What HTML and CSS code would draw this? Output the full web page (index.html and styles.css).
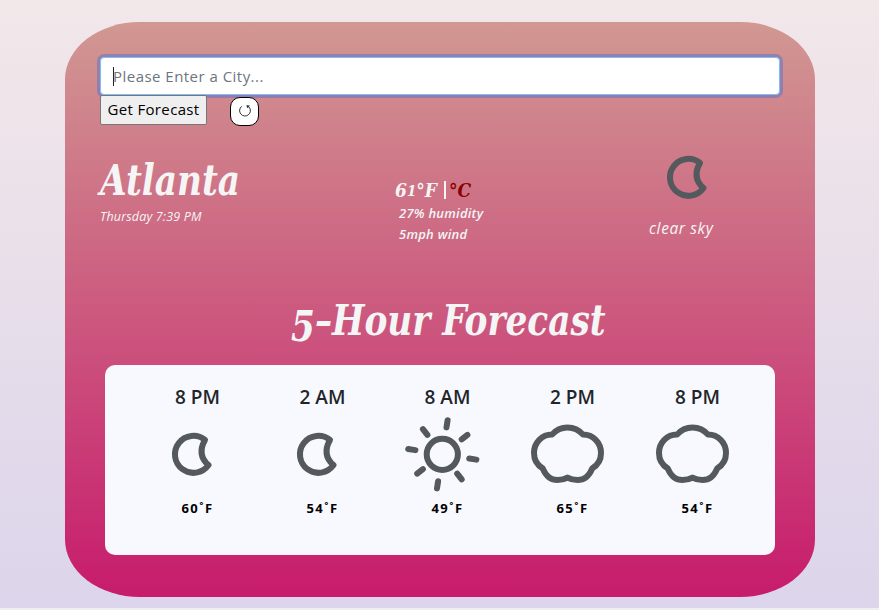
FILE: index.html
```html
<!DOCTYPE html>
<html lang="en">
<head>
<meta charset="utf-8">
<title>Weather</title>
<link rel="stylesheet" href="styles.css">
</head>
<body>
<svg class="symbols" aria-hidden="true">
  <symbol id="moon" viewBox="0 0 80 80"><path d="M53 25.900A18.500 18.500 0 1 0 56.500 51.100C48 43.600 48 34.600 53 25.900Z"/></symbol>
  <symbol id="sun" viewBox="0 0 80 80">
    <circle cx="40.3" cy="40.3" r="15.6"/>
    <g id="rays">
      <path d="M44.5 13.4L45.6 6.2M59.7 25.4L65.4 20.9M67.2 44.5L74.4 45.6M55.2 59.7L59.7 65.4M36.1 67.2L35 74.4M20.9 55.2L15.2 59.7M13.4 36.1L6.2 35M25.4 20.9L20.9 15.2"/>
    </g>
  </symbol>
  <symbol id="cloud" viewBox="0 0 80 80"><path d="M25 20.6C29 16 34.5 13.5 40.5 13.500S52 16 56 20.6C66 20.6 74 28.5 74 39C74 45.5 71 51 65.3 54.3C62.5 61 57.5 66 50.5 66C47 66 43.5 65.3 40.5 63.6C37.5 65.3 34 66 30.5 66C23.5 66 18.5 61 15.7 54.3C10 51 7 45.5 7 39C7 28.5 15 20.6 25 20.6Z"/></symbol>
</svg>
<main class="card">
  <form class="search">
    <div class="field"><span class="caret"></span><span>Please Enter a City...</span></div>
    <div class="actions">
      <button type="button" class="submit">Get Forecast</button>
      <button type="button" class="refresh" aria-label="Refresh"><svg viewBox="0 0 14 14"><path d="M3.6 2.4A5.4 5.4 0 1 0 11.2 3.2L9.3 2"/><path class="head" d="M8.3 1.2L12 1.5L9.3 4.2Z"/></svg></button>
    </div>
  </form>
  <section class="current">
    <div class="place"><h1><span class="fit">Atlanta</span></h1><p>Thursday 7:39 PM</p></div>
    <div class="readings">
      <div class="temp"><b>6</b><b class="small">1</b><b>°F</b><i class="bar"></i><b class="unit">°C</b></div>
      <p>27% humidity</p>
      <p>5mph wind</p>
    </div>
    <div class="sky"><svg class="icon"><use href="#moon"/></svg><p>clear sky</p></div>
  </section>
  <h2><span class="fit"><span class="drop">5</span>–Hour Forecast</span></h2>
  <section class="hours">
    <div class="hour"><h3>8 PM</h3><svg class="icon"><use href="#moon"/></svg><p>60˚F</p></div>
    <div class="hour"><h3>2 AM</h3><svg class="icon"><use href="#moon"/></svg><p>54˚F</p></div>
    <div class="hour"><h3>8 AM</h3><svg class="icon"><use href="#sun"/></svg><p>49˚F</p></div>
    <div class="hour"><h3>2 PM</h3><svg class="icon"><use href="#cloud"/></svg><p>65˚F</p></div>
    <div class="hour"><h3>8 PM</h3><svg class="icon"><use href="#cloud"/></svg><p>54˚F</p></div>
  </section>
</main>
</body>
</html>
```
FILE: styles.css
```css
* { box-sizing: border-box; }
html { height: 100%; background: #f0f0ef; overflow: hidden; }
body {
  margin: 0;
  height: 608px;
  padding-top: 22px;
  background: linear-gradient(#f2e7e9, #dcd5eb);
  font-family: "Open Sans", "Noto Sans", sans-serif;
  overflow: hidden;
}
h1, h2, h3, p { margin: 0; }
.symbols { display: none; }
.card {
  width: 750px;
  height: 575px;
  margin: 0 auto 0 65px;
  padding: 35px 35px 0;
  border-radius: 10%;
  background: linear-gradient(#d19892, #c71b6c);
  color: #f5f5f5;
}
.field {
  display: flex;
  align-items: center;
  height: 38px;
  width: 680px;
  padding-left: 12px;
  border: 1px solid #80bdff;
  border-radius: 4px;
  background: #fff;
  box-shadow: 0 0 0 3px rgba(65, 110, 215, .42);
  color: #6c757d;
  font-size: 15px;
  letter-spacing: .47px;
}
.caret { width: 1px; height: 19px; margin-right: -1px; background: #222; }
.actions { display: flex; height: 31px; }
.submit {
  width: 107px;
  height: 30px;
  padding: 0 0 2px;
  border: 1px solid #767676;
  border-radius: 2px;
  background: #efefef;
  color: #000;
  font: 15px/26px "Open Sans", sans-serif;
  letter-spacing: .35px;
  white-space: nowrap;
}
.refresh {
  width: 29px;
  height: 29px;
  margin: 2px 0 0 23px;
  padding: 0 0 2px;
  border: 1px solid #000;
  border-radius: 10px;
  background: #fff;
}
.refresh svg { display: block; width: 14px; height: 14px; margin: 0 auto; }
.refresh path { fill: none; stroke: #333; stroke-width: 1; }
.refresh .head { fill: #333; stroke: none; }
.fit { display: inline-block; transform: scaleX(.908); transform-origin: 0 50%; white-space: nowrap; }
.current {
  display: grid;
  grid-template-columns: 295px 250px 135px;
  height: 157px;
  padding-top: 11px;
  font-style: italic;
}
.place { padding-top: 20px; }
h1, h2, .temp { font-family: "DejaVu Serif Condensed", "DejaVu Serif", serif; font-stretch: condensed; font-style: italic; font-weight: 700; }
h1 { height: 49px; font-size: 42px; line-height: 48px; }
.place p { font-size: 12.5px; line-height: 21px; font-weight: 500; letter-spacing: .17px; }
.readings { padding-top: 39px; }
.temp { display: flex; align-items: center; height: 27px; font-size: 19px; line-height: 26px; }
.temp .small { font-size: 15px; padding-top: 3px; }
.bar { width: 2px; height: 18px; margin: 0 3px 0 7px; background: #f5f5f5; }
.unit { color: #8b0000; }
.readings p { padding-left: 4px; font-size: 13px; line-height: 21px; font-weight: 600; letter-spacing: .25px; }
.icon { display: block; width: 80px; height: 80px; fill: none; stroke: #54595e; stroke-width: 6; stroke-linejoin: round; }
#rays { stroke-linecap: round; }
.sky .icon { margin-left: 2px; }
.sky p { padding-left: 4px; font-size: 15.5px; line-height: 22px; font-weight: 500; letter-spacing: .6px; }
h2 { height: 82px; padding-left: 191px; font-size: 42px; line-height: 75px; }
.drop { display: inline-block; transform: translateY(6px); }
.hours {
  display: grid;
  grid-template-columns: repeat(5, 125px);
  width: 670px;
  height: 190px;
  margin-left: 5px;
  padding: 20px 0 0 30px;
  border-radius: 10px;
  background: #f8f9ff;
  color: #000;
}
.hour h3 { color: #212529; font-size: 19px; line-height: 25px; font-weight: 600; text-align: center; }
.hour .icon { margin: 4px 0 0 17px; }
.hour p { font-size: 13px; line-height: 29px; font-weight: 700; letter-spacing: 1.5px; text-align: center; }
```
